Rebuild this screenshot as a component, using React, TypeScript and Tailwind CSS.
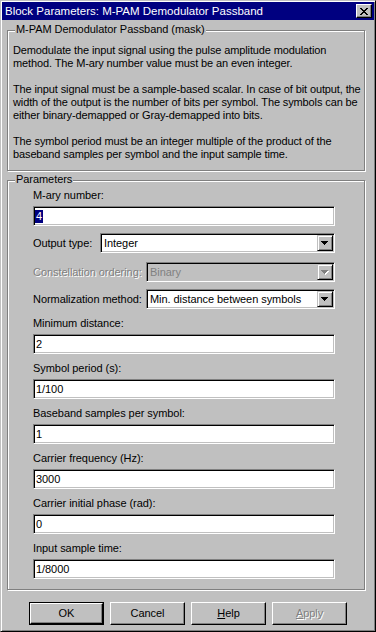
import React from 'react';

const sunken =
  'border border-t-[#808080] border-l-[#808080] border-r-white border-b-white shadow-[inset_1px_1px_0_#000,inset_-1px_-1px_0_#c0c0c0]';

const etched = 'relative border border-[#808080] shadow-[inset_1px_1px_0_#fff,1px_1px_0_#fff]';

function Arrow({ disabled }: { disabled?: boolean }) {
  const fill = disabled ? '#808080' : '#000';
  return (
    <svg width="8" height="5" viewBox="0 0 8 5" shapeRendering="crispEdges">
      {disabled && (
        <g fill="#fff">
          <rect x="1" y="1" width="7" height="1" />
          <rect x="2" y="2" width="5" height="1" />
          <rect x="3" y="3" width="3" height="1" />
          <rect x="4" y="4" width="1" height="1" />
        </g>
      )}
      <g fill={fill}>
        <rect x="0" y="0" width="7" height="1" />
        <rect x="1" y="1" width="5" height="1" />
        <rect x="2" y="2" width="3" height="1" />
        <rect x="3" y="3" width="1" height="1" />
      </g>
    </svg>
  );
}

function Edit({ value, selected }: { value: string; selected?: boolean }) {
  return (
    <div className={`${sunken} flex h-[20px] w-[302px] items-center bg-white pl-[1px]`}>
      {selected ? (
        <span className="bg-[#000080] px-[1px] leading-[13px] text-white">{value}</span>
      ) : (
        <span className="pl-[1px]">{value}</span>
      )}
    </div>
  );
}

function Combo({ value, width, disabled }: { value: string; width: string; disabled?: boolean }) {
  return (
    <div
      className={`${sunken} flex h-[20px] items-center ${width} ${
        disabled ? 'bg-[#c0c0c0] text-[#808080]' : 'bg-white'
      }`}
    >
      <span className="flex-1 pl-[3px]">{value}</span>
      <div className="mr-[1px] flex h-[16px] w-[16px] items-center justify-center border border-t-[#c0c0c0] border-l-[#c0c0c0] border-r-black border-b-black bg-[#c0c0c0] shadow-[inset_1px_1px_0_#fff,inset_-1px_-1px_0_#808080]">
        <Arrow disabled={disabled} />
      </div>
    </div>
  );
}

function Field({ label, value }: { label: string; value: string }) {
  return (
    <div className="mt-[8px]">
      <div className="h-[13px]">{label}</div>
      <div className="mt-[4px]">
        <Edit value={value} />
      </div>
    </div>
  );
}

function Button({ children, isDefault, disabled }: { children: React.ReactNode; isDefault?: boolean; disabled?: boolean }) {
  return (
    <div className={`h-[23px] w-[75px] ${isDefault ? 'border border-black' : ''}`}>
      <div
        className={`flex h-full w-full items-center justify-center border border-t-white border-l-white border-r-black border-b-black shadow-[inset_-1px_-1px_0_#808080] ${
          disabled ? 'text-[#808080] [text-shadow:1px_1px_0_#fff]' : ''
        }`}
      >
        {children}
      </div>
    </div>
  );
}

export default function App() {
  return (
    <div className="h-[632px] w-[376px] overflow-hidden border border-t-[#c0c0c0] border-l-[#c0c0c0] border-r-black border-b-black bg-[#c0c0c0] p-[1px] font-['Liberation_Sans',Arial,sans-serif] text-[11px] leading-[13px] tracking-[-0.06px] text-black shadow-[inset_1px_1px_0_#fff,inset_-1px_-1px_0_#808080]">
      <div className="flex h-[18px] items-center justify-between bg-[#000080] pl-[3px] pr-[2px]">
        <span className="text-[11.5px] tracking-normal text-white">Block Parameters: M-PAM Demodulator Passband</span>
        <div className="flex h-[14px] w-[16px] items-center justify-center border border-t-white border-l-white border-r-black border-b-black bg-[#c0c0c0] shadow-[inset_-1px_-1px_0_#808080]">
          <svg width="8" height="7" viewBox="0 0 8 7" shapeRendering="crispEdges" fill="#000">
            <rect x="0" y="0" width="2" height="1" />
            <rect x="6" y="0" width="2" height="1" />
            <rect x="1" y="1" width="2" height="1" />
            <rect x="5" y="1" width="2" height="1" />
            <rect x="2" y="2" width="4" height="1" />
            <rect x="3" y="3" width="2" height="1" />
            <rect x="2" y="4" width="4" height="1" />
            <rect x="1" y="5" width="2" height="1" />
            <rect x="5" y="5" width="2" height="1" />
            <rect x="0" y="6" width="2" height="1" />
            <rect x="6" y="6" width="2" height="1" />
          </svg>
        </div>
      </div>

      <div className={`${etched} ml-[5px] mt-[10px] w-[358px] whitespace-nowrap pb-[9px] pl-[5px] pt-[13px] tracking-[-0.12px]`}>
        <span className="absolute left-[7px] top-[-8px] bg-[#c0c0c0] px-[1px] tracking-[-0.06px]">M-PAM Demodulator Passband (mask)</span>
        <p>
          Demodulate the input signal using the pulse amplitude modulation
          <br />
          method. The M-ary number value must be an even integer.
        </p>
        <p className="mt-[13px]">
          The input signal must be a sample-based scalar. In case of bit output, the
          <br />
          width of the output is the number of bits per symbol. The symbols can be
          <br />
          either binary-demapped or Gray-demapped into bits.
        </p>
        <p className="mt-[13px]">
          The symbol period must be an integer multiple of the product of the
          <br />
          baseband samples per symbol and the input sample time.
        </p>
      </div>

      <div className={`${etched} ml-[5px] mt-[9px] w-[358px] whitespace-nowrap pb-[10px] pl-[25px] pt-[8px]`}>
        <span className="absolute left-[7px] top-[-8px] bg-[#c0c0c0] px-[1px]">Parameters</span>
        <div className="h-[13px]">M-ary number:</div>
        <div className="mt-[4px]">
          <Edit value="4" selected />
        </div>
        <div className="mt-[7px] flex items-center">
          <span className="w-[67px]">Output type:</span>
          <Combo value="Integer" width="w-[235px]" />
        </div>
        <div className="mt-[9px] flex items-center">
          <span className="w-[113px] text-[#808080] [text-shadow:1px_1px_0_#fff]">Constellation ordering:</span>
          <Combo value="Binary" width="w-[189px]" disabled />
        </div>
        <div className="mt-[7px] flex items-center">
          <span className="w-[113px]">Normalization method:</span>
          <Combo value="Min. distance between symbols" width="w-[189px]" />
        </div>
        <div className="mt-[1px]">
          <Field label="Minimum distance:" value="2" />
          <Field label="Symbol period (s):" value="1/100" />
          <Field label="Baseband samples per symbol:" value="1" />
          <Field label="Carrier frequency (Hz):" value="3000" />
          <Field label="Carrier initial phase (rad):" value="0" />
          <Field label="Input sample time:" value="1/8000" />
        </div>
      </div>

      <div className="mt-[12px] flex justify-center gap-[6px]">
        <Button isDefault>OK</Button>
        <Button>Cancel</Button>
        <Button>
          <span>
            <u>H</u>elp
          </span>
        </Button>
        <Button disabled>
          <span>
            <u>A</u>pply
          </span>
        </Button>
      </div>
    </div>
  );
}
